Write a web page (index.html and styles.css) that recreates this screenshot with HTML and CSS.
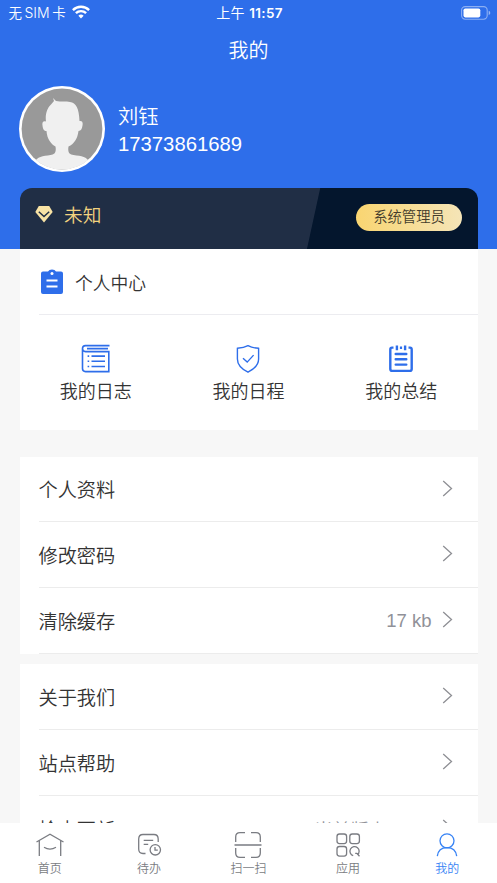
FILE: index.html
```html
<!DOCTYPE html>
<html lang="zh-CN">
<head>
<meta charset="utf-8">
<title>我的</title>
<link rel="stylesheet" href="styles.css">
</head>
<body>
<div class="app">
  <header class="hero">
    <div class="status">
      <div class="carrier"><span>无<span class="sim">SIM</span>卡</span>
        <svg width="18" height="14" viewBox="0 0 18 14" fill="none" stroke="#fff" stroke-width="2.4"><path d="M.9 5.1a11.5 11.5 0 0 1 16.2 0M3.9 8.2a7.2 7.2 0 0 1 10.2 0"/><path d="M9 13.4l-2.6-2.6a3.7 3.7 0 0 1 5.2 0z" fill="#fff" stroke="none"/></svg>
      </div>
      <div class="clock">上午 <b>11:57</b></div>
      <svg class="battery" width="30" height="14" viewBox="0 0 30 14"><rect x=".6" y=".6" width="25.6" height="12.6" rx="3.6" fill="none" stroke="#fff" stroke-opacity=".45" stroke-width="1.1"/><rect x="2.5" y="2.5" width="16.8" height="8.9" rx="1.8" fill="#fff"/><path d="M27.7 4.8q1.6.5 1.6 2.1t-1.6 2.1z" fill="#fff" fill-opacity=".5"/></svg>
    </div>
    <h1 class="title">我的</h1>
    <section class="profile">
      <svg class="avatar" viewBox="0 0 86 86"><defs><clipPath id="disc"><circle cx="43" cy="43" r="40.6"/></clipPath></defs><circle cx="43" cy="43" r="43" fill="#fff"/><circle cx="43" cy="43" r="40.4" fill="#999"/><path clip-path="url(#disc)" fill="#f0f0f0" d="M35 15l-1-3 3 3c5 1 10 0 14 1 6 1 9 6 9.500 19 3-.5 3.500 1.500 3 4.500-.5 3.500-1.500 5-4 5.500C58.500 53 55 58 49.500 60.500c-1 6 1 8 5 8.500 8 1 14 2 15.500 7v10H16V76c1.500-5 8-6 15.500-7 4-.5 6-2.500 5-8.500C32 58 28 53 27.500 45c-2.500 0-3.500-1.500-4-5.500-.5-3 .5-5 3.500-4C26 29 28 22 32 18.500z"/></svg>
      <div class="who"><div>刘钰</div><div>17373861689</div></div>
    </section>
    <section class="member">
      <svg width="18" height="18" viewBox="0 0 18 18"><path d="M3.800 1h10.400L17.700 7 9 17.500.3 7z" fill="#f8e3a5"/><path d="M3.800 6.800L9 11.600l5.200-4.800" fill="none" stroke="#202e45" stroke-width="1.500"/></svg>
      <span class="level">未知</span><span class="role">系统管理员</span>
    </section>
  </header>
  <main>
    <section class="card center">
      <div class="heading"><svg width="22" height="26" viewBox="0 0 22 26"><path d="M2 2.500h5Q8 .5 11 .5t4 2h5q2 0 2 2V23q0 2-2 2H2q-2 0-2-2V4.500q0-2 2-2z" fill="#2e6eea"/><circle cx="11" cy="4.500" r="1.500" fill="#fff"/><path d="M5.500 11.500h11m-11 6h11" stroke="#fff" stroke-width="2"/></svg><span>个人中心</span></div>
      <div class="shortcuts">
        <div class="shortcut"><svg width="30" height="30" viewBox="0 0 30 30" fill="none" stroke="#2e6eea" stroke-width="1.600"><path d="M28.500 1.600H4.500a3 3 0 0 0 0 6h23.300v20H4.500q-3 0-3-3V4.600M6 4.600h21"/><path d="M10.500 12.100H24m-13.500 5.200H24m-13.500 5.200H24"/><path d="M6.600 12.100h1.600m-1.600 5.200h1.600m-1.600 5.200h1.600"/></svg><span>我的日志</span></div>
        <div class="shortcut"><svg width="30" height="30" viewBox="0 0 30 30" fill="none" stroke="#2e6eea" stroke-width="1.400"><path d="M15 1.700Q11 4 4.400 4.300V15c0 6 5.200 10.500 10.600 13.200C20.400 25.500 25.600 21 25.600 15V4.300Q19 4 15 1.700z"/><path d="M10 14.200l4.200 3.900 6.400-7"/></svg><span>我的日程</span></div>
        <div class="shortcut"><svg width="30" height="30" viewBox="0 0 30 30" fill="none" stroke="#2e6eea" stroke-width="2.400"><path d="M7.500 3.600H6q-1.700 0-1.700 1.800V25q0 1.900 1.800 1.900h17.800q1.800 0 1.800-1.900V5.400q0-1.800-1.700-1.800h-1.500M13.900 3.800h2.200M10.900 1.400v4.800m8.200-4.800v4.800"/><path d="M9.700 10h10.600M9.700 15.300h10.600M9.700 20.600h10.600" stroke-linecap="round"/></svg><span>我的总结</span></div>
      </div>
    </section>
    <section class="card list first">
      <div class="row"><span>个人资料</span><svg class="arrow" viewBox="0 0 11 17"><path d="M1.200 1l8.300 7.500L1.200 16"/></svg></div>
      <div class="row"><span>修改密码</span><svg class="arrow" viewBox="0 0 11 17"><path d="M1.200 1l8.300 7.500L1.200 16"/></svg></div>
      <div class="row"><span>清除缓存</span><span class="value">17 kb</span><svg class="arrow" viewBox="0 0 11 17"><path d="M1.200 1l8.300 7.500L1.200 16"/></svg></div>
    </section>
    <section class="card list second">
      <div class="row"><span>关于我们</span><svg class="arrow" viewBox="0 0 11 17"><path d="M1.200 1l8.300 7.500L1.200 16"/></svg></div>
      <div class="row"><span>站点帮助</span><svg class="arrow" viewBox="0 0 11 17"><path d="M1.200 1l8.300 7.500L1.200 16"/></svg></div>
      <div class="row"><span>检查更新</span><span class="value version">当前版本:1.0.0</span><svg class="arrow" viewBox="0 0 11 17"><path d="M1.200 1l8.300 7.500L1.200 16"/></svg></div>
    </section>
  </main>
  <nav class="tabs">
    <div class="tab"><svg width="30" height="30" viewBox="0 0 30 30"><path d="M1.500 12L15 4.200 28.500 12M4.300 10.700V26m21.400-15.300V26M9 17.300q6 3.600 12 0"/></svg><span>首页</span></div>
    <div class="tab"><svg width="30" height="30" viewBox="0 0 30 30" stroke-width="1.500"><path d="M11.500 23.500H9q-4.300 0-4.300-4.500V9q0-4.500 4.300-4.500h10.900q4.300 0 4.300 4.500v3M9.700 10.400h9.500M9.700 14.300h4.500"/><circle cx="21.300" cy="19.800" r="5.200"/><path d="M21 16.900v3.200h2.800"/></svg><span>待办</span></div>
    <div class="tab"><svg width="30" height="30" viewBox="0 0 30 30"><path d="M2.700 12V7q0-4.300 4.300-4.300h5m6 0h5q4.300 0 4.300 4.300v5M2.700 18v5q0 4.300 4.300 4.300h5m6 0h5q4.300 0 4.300-4.300v-5M1.500 15h27"/></svg><span>扫一扫</span></div>
    <div class="tab"><svg width="30" height="30" viewBox="0 0 30 30"><rect x="4" y="4" width="9.600" height="9.600" rx="2.500"/><rect x="16.800" y="4" width="9.600" height="9.600" rx="2.500"/><rect x="4" y="16.500" width="9.600" height="9.600" rx="2.500"/><path d="M20.200 25.600a4.600 4.600 0 1 1 4.200-.8m-2.200-1.500h1.600l2.700 2.900"/></svg><span>应用</span></div>
    <div class="tab active"><svg width="30" height="30" viewBox="0 0 30 30"><circle cx="15" cy="10.800" r="7"/><path d="M5.300 26.200q1-8.600 9.700-8.600t9.700 8.600"/></svg><span>我的</span></div>
  </nav>
</div>
</body>
</html>
```
FILE: styles.css
```css
* { box-sizing: border-box; }
body { margin: 0; font-family: "Liberation Sans", "Noto Sans CJK SC", sans-serif; color: #333; background: #f7f7f7; font-weight: 350; }
svg { display: block; flex: none; }
.app { height: 883px; display: flex; flex-direction: column; overflow: hidden; }
.hero { height: 249px; flex: none; background: #2e6eea; color: #fff; padding: 0 19.500px; display: flex; flex-direction: column; font-weight: 300; }
.status { height: 26px; margin: 0 -13px 0 -11px; display: grid; grid-template-columns: 1fr auto 1fr; align-items: center; font: 350 13.500px/20px Inter, "Noto Sans CJK SC", sans-serif; }
.carrier { display: flex; align-items: center; gap: 6px; }
.carrier svg { margin-top: -2px; }
.sim { margin: 0 2.500px; font-size: 14px; }
.clock { font-size: 14px; letter-spacing: .35px; font-weight: 400; }
.clock b { font-weight: 600; font-size: 13.500px; }
.battery { justify-self: end; }
.title { margin: 0; height: 48px; font-size: 20px; line-height: 50px; font-weight: 350; text-align: center; }
.profile { height: 86px; margin-top: 12px; display: flex; align-items: center; margin-left: -.5px; }
.avatar { width: 86px; height: 86px; }
.who { margin-left: 13px; font-size: 20.300px; line-height: 28px; padding-top: 2px; }
.who div:first-child { font-weight: 350; position: relative; top: 1px; }
.member { height: 61px; margin-top: 16px; padding: 0 15.500px 4px; border-radius: 12px 12px 0 0; display: flex; align-items: center; background: linear-gradient(102.300deg, #202e45 0 63.600%, #04162d 63.800%); }
.member svg { margin-top: -6px; }
.level { margin-left: 11px; font-size: 18.700px; line-height: 28px; color: #f3d37f; margin-top: -1px; font-weight: 350; }
.role { margin-left: auto; width: 106px; height: 27px; border-radius: 14px; background: linear-gradient(90deg, #f9d571, #f5e5b8); color: #443d2c; font-size: 14.300px; line-height: 27px; text-align: center; margin-top: 1px; font-weight: 350; }
main { flex: 1; min-height: 0; overflow: hidden; padding: 0 19.500px; }
.card { background: #fff; }
.center { height: 181px; }
.heading { height: 66px; margin-left: 19px; border-bottom: 1px solid #ececf0; display: flex; align-items: center; gap: 12.500px; padding-left: 2px; font-size: 17.800px; }
.shortcuts { display: grid; grid-template-columns: repeat(3, 1fr); padding-top: 29px; }
.shortcut { display: flex; flex-direction: column; align-items: center; gap: 4px; font-size: 18px; line-height: 28px; }
.list { font-size: 19.200px; }
.first { margin-top: 27px; height: 197px; }
.second { margin-top: 10px; }
.row { height: 66px; margin-left: 19px; padding: 0 25px 0 0; border-bottom: 1px solid #ececec; display: flex; align-items: center; }
.first .row:first-child { height: 65px; }
.arrow { width: 11px; height: 17px; margin-left: auto; margin-top: -2px; fill: none; stroke: #8e8f94; stroke-width: 1.300; }
.value { margin-left: auto; color: #909198; font-size: 18.500px; padding-top: 1px; }
.version { font-size: 18px; }
.value + .arrow { margin-left: 10px; }
.tabs { height: 60px; flex: none; background: #fff; display: grid; grid-template-columns: repeat(5, 1fr); padding-top: 7px; }
.tab { display: flex; flex-direction: column; align-items: center; font-size: 12px; line-height: 18px; color: #7a7c82; }
.tab svg { fill: none; stroke: currentColor; stroke-width: 1.300; }
.tab.active { color: #3783f5; }
```
